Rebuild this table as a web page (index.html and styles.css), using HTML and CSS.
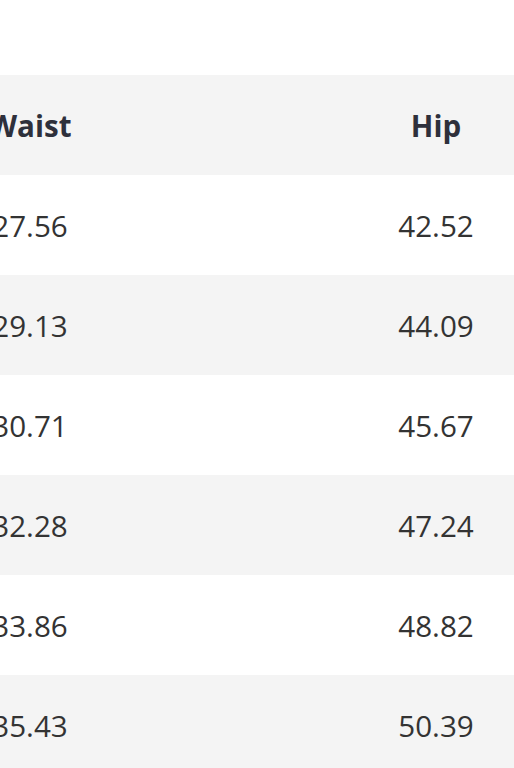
FILE: index.html
```html
<!DOCTYPE html>
<html>
<head>
<meta charset="utf-8">
<link rel="stylesheet" href="styles.css">
</head>
<body>
<div class="wrap">
  <table class="sizes">
    <colgroup>
      <col class="c-waist">
      <col class="c-gap">
      <col class="c-hip">
    </colgroup>
    <thead>
      <tr><th>Waist</th><th></th><th>Hip</th></tr>
    </thead>
    <tbody>
      <tr><td>27.56</td><td></td><td>42.52</td></tr>
      <tr><td>29.13</td><td></td><td>44.09</td></tr>
      <tr><td>30.71</td><td></td><td>45.67</td></tr>
      <tr><td>32.28</td><td></td><td>47.24</td></tr>
      <tr><td>33.86</td><td></td><td>48.82</td></tr>
      <tr><td>35.43</td><td></td><td>50.39</td></tr>
    </tbody>
  </table>
</div>
</body>
</html>
```
FILE: styles.css
```css
html, body {
  margin: 0;
  padding: 0;
  background: #fff;
}
.wrap {
  width: 514px;
  overflow: hidden;
  padding-top: 75px;
}
.sizes {
  margin-left: -70px;
  width: 586px;
  table-layout: fixed;
  border-collapse: collapse;
  font-family: "Open Sans", sans-serif;
  font-size: 29.6px;
  color: #333;
}
.c-waist { width: 200px; }
.c-gap { width: 226px; }
.c-hip { width: 160px; }
.sizes th, .sizes td {
  height: 100px;
  padding: 0;
  text-align: center;
  vertical-align: middle;
  white-space: nowrap;
}
.sizes th {
  font-weight: 700;
  color: #2e303b;
}
.sizes thead tr,
.sizes tbody tr:nth-child(even) {
  background: #f4f4f4;
}
```
